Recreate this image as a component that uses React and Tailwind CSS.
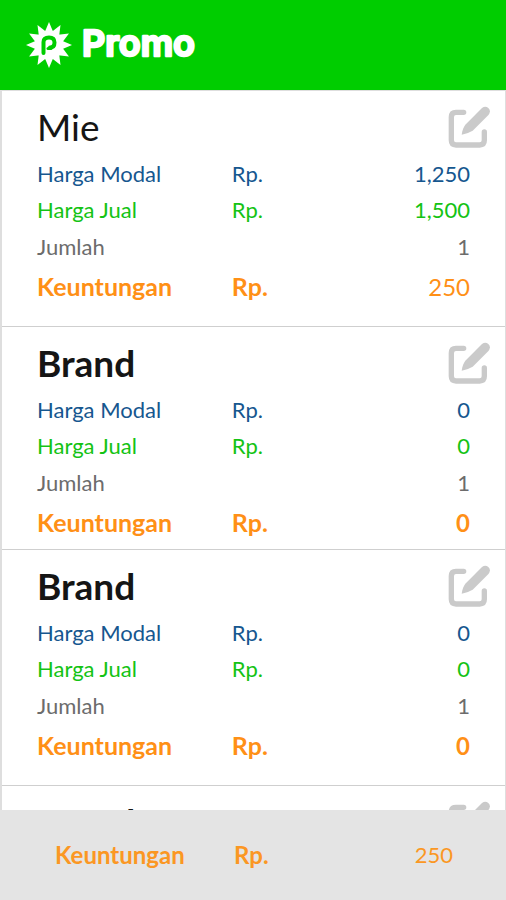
import React from 'react';

const items = [
  { id: 1, name: 'Mie', named: true, modal: '1,250', jual: '1,500', jumlah: '1', untung: '250', tall: true },
  { id: 2, name: 'Brand', modal: '0', jual: '0', jumlah: '1', untung: '0', tall: false },
  { id: 3, name: 'Brand', modal: '0', jual: '0', jumlah: '1', untung: '0', tall: true },
  { id: 4, name: 'Brand', modal: '0', jual: '0', jumlah: '1', untung: '0', tall: false },
];

const Logo = () => (
  <svg viewBox="-24 -24 48 48" className="h-12 w-12" aria-hidden="true">
    <g fill="#fff">
      <circle r="14.5" />
      {[0, 30, 60, 90, 120, 150, 180, 210, 240, 270, 300, 330].map((angle) => (
        <path key={angle} d="M-4.2 -13 L0 -23 L4.2 -13 Z" transform={`rotate(${angle})`} />
      ))}
    </g>
    <g fill="none" stroke="#00cd00" strokeWidth="4" strokeLinecap="round">
      <path d="M-5.5 8 V-3 Q-5.5 -7.5 0 -7.5 Q5.5 -7.5 5.5 -2.5 Q5.5 2.5 1 2.5" />
    </g>
    <path d="M-1 3.5 H2" stroke="#00cd00" strokeWidth="3" strokeLinecap="round" />
  </svg>
);

const Wordmark = () => (
  <svg viewBox="0 0 120 48" className="h-12 w-[120px]" role="img" aria-label="Promo">
    <text
      x="1"
      y="35"
      fill="#fff"
      stroke="#fff"
      strokeWidth="2.5"
      strokeLinejoin="round"
      className="font-['Inter',sans-serif] text-[36px] font-semibold"
    >
      Promo
    </text>
  </svg>
);

const EditIcon = () => (
  <svg viewBox="0 0 126 126" className="h-[42px] w-[42px]" aria-hidden="true">
    <path
      d="M47 19 H24 Q10 19 10 33 V103 Q10 117 24 117 H95 Q109 117 109 103 V78"
      fill="none"
      stroke="#cacaca"
      strokeWidth="16"
      strokeLinecap="round"
    />
    <path
      d="M41 86 Q44 66 52 56 L102 6 Q112 -2 121 6 Q130 14 122 26 L74 74 Q61 82 41 86 Z"
      fill="#cacaca"
    />
  </svg>
);

const Row = ({ label, value, currency, className }) => (
  <tr className={className}>
    <th scope="row" className="w-[45%] p-0 text-left font-normal">{label}</th>
    <td className="p-0">{currency ? 'Rp.' : ''}</td>
    <td className="p-0 text-right">{value}</td>
  </tr>
);

const Item = ({ item }) => (
  <li className={`border-b border-[#cfcfcf] pl-[35px] pr-[15px] pt-4 ${item.tall ? 'pb-[17px]' : 'pb-1'}`}>
    <div className="mb-2 flex h-10 items-center justify-between">
      <h2 className={`text-[37px] leading-10 text-[#151515] ${item.named ? 'font-normal' : 'font-bold'}`}>{item.name}</h2>
      <button type="button" aria-label={`Edit ${item.name}`}>
        <EditIcon />
      </button>
    </div>
    <div className="pr-5">
      <table className="w-full border-collapse text-[22px]">
        <tbody>
          <Row label="Harga Modal" value={item.modal} currency className="h-9 text-[#16578f]" />
          <Row label="Harga Jual" value={item.jual} currency className="h-9 text-[#14c314]" />
          <Row label="Jumlah" value={item.jumlah} className="h-[38px] text-[#6c6c6c]" />
          <tr className="h-11 text-[25px] font-bold text-[#ff9016]">
            <th scope="row" className="p-0 text-left">Keuntungan</th>
            <td className="p-0">Rp.</td>
            <td className={`p-0 text-right text-2xl ${item.named ? 'font-normal' : ''}`}>{item.untung}</td>
          </tr>
        </tbody>
      </table>
    </div>
  </li>
);

const App = () => {
  return (
    <div className="flex h-screen flex-col bg-white font-['Lato',sans-serif]">
      <header className="flex h-[90px] shrink-0 items-center gap-2 bg-[#00cd00] pl-[25px]">
        <Logo />
        <h1>
          <Wordmark />
        </h1>
      </header>

      <main className="min-h-0 grow overflow-y-auto border-l-2 border-r border-t border-[#dedede] [scrollbar-width:none]">
        <ul>
          {items.map((item) => (
            <Item key={item.id} item={item} />
          ))}
        </ul>
      </main>

      <footer className="flex h-[90px] shrink-0 items-center bg-[#e4e4e4] pl-[55px] pr-[53px] text-2xl text-[#fb9723]">
        <span className="w-[45%] font-bold">Keuntungan</span>
        <span className="font-bold">Rp.</span>
        <span className="grow text-right text-[22px]">250</span>
      </footer>
    </div>
  );
};

export default App;
